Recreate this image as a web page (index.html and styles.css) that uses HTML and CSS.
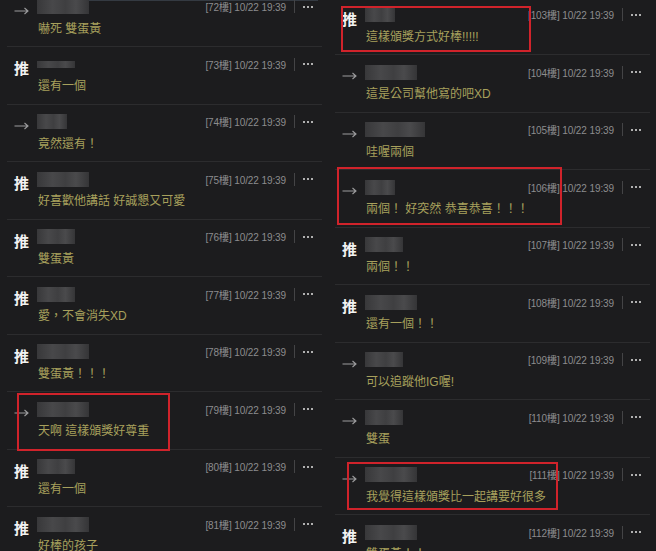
FILE: index.html
```html
<!DOCTYPE html>
<html lang="zh-Hant">
<head>
    <meta charset="UTF-8">
    <title>留言</title>
    <link rel="stylesheet" href="styles.css">
</head>
<body>
    <div class="panels">
        <!-- left screenshot -->
        <div class="panel panel-left">
            <div class="list">
                <div class="row"><div class="tag"><span class="arrow"><svg width="15" height="8" viewBox="0 0 15 8"><path d="M0.5 4H14M10.5 1L14 4L10.5 7" fill="none" stroke="currentColor" stroke-width="1.1"/></svg></span></div>
                    <div class="body"><div class="head"><span class="user u-l"></span><span class="meta">[72樓] 10/22 19:39</span><span class="bar"></span><span class="more"><i></i><i></i><i></i></span></div><div class="text">嚇死 雙蛋黃</div></div></div>
                <div class="row"><div class="tag"><span class="push">推</span></div>
                    <div class="body"><div class="head"><span class="user u-m thin"></span><span class="meta">[73樓] 10/22 19:39</span><span class="bar"></span><span class="more"><i></i><i></i><i></i></span></div><div class="text">還有一個</div></div></div>
                <div class="row"><div class="tag"><span class="arrow"><svg width="15" height="8" viewBox="0 0 15 8"><path d="M0.5 4H14M10.5 1L14 4L10.5 7" fill="none" stroke="currentColor" stroke-width="1.1"/></svg></span></div>
                    <div class="body"><div class="head"><span class="user u-s"></span><span class="meta">[74樓] 10/22 19:39</span><span class="bar"></span><span class="more"><i></i><i></i><i></i></span></div><div class="text">竟然還有！</div></div></div>
                <div class="row"><div class="tag"><span class="push">推</span></div>
                    <div class="body"><div class="head"><span class="user u-l"></span><span class="meta">[75樓] 10/22 19:39</span><span class="bar"></span><span class="more"><i></i><i></i><i></i></span></div><div class="text">好喜歡他講話 好誠懇又可愛</div></div></div>
                <div class="row"><div class="tag"><span class="push">推</span></div>
                    <div class="body"><div class="head"><span class="user u-m"></span><span class="meta">[76樓] 10/22 19:39</span><span class="bar"></span><span class="more"><i></i><i></i><i></i></span></div><div class="text">雙蛋黃</div></div></div>
                <div class="row"><div class="tag"><span class="push">推</span></div>
                    <div class="body"><div class="head"><span class="user u-m"></span><span class="meta">[77樓] 10/22 19:39</span><span class="bar"></span><span class="more"><i></i><i></i><i></i></span></div><div class="text">愛，不會消失XD</div></div></div>
                <div class="row"><div class="tag"><span class="push">推</span></div>
                    <div class="body"><div class="head"><span class="user u-l"></span><span class="meta">[78樓] 10/22 19:39</span><span class="bar"></span><span class="more"><i></i><i></i><i></i></span></div><div class="text">雙蛋黃！！！</div></div></div>
                <div class="row"><div class="tag"><span class="arrow"><svg width="15" height="8" viewBox="0 0 15 8"><path d="M0.5 4H14M10.5 1L14 4L10.5 7" fill="none" stroke="currentColor" stroke-width="1.1"/></svg></span></div>
                    <div class="body"><div class="head"><span class="user u-l"></span><span class="meta">[79樓] 10/22 19:39</span><span class="bar"></span><span class="more"><i></i><i></i><i></i></span></div><div class="text">天啊 這樣頒獎好尊重</div></div>
                    <div class="mark mark-79"></div></div>
                <div class="row"><div class="tag"><span class="push">推</span></div>
                    <div class="body"><div class="head"><span class="user u-m"></span><span class="meta">[80樓] 10/22 19:39</span><span class="bar"></span><span class="more"><i></i><i></i><i></i></span></div><div class="text">還有一個</div></div></div>
                <div class="row"><div class="tag"><span class="push">推</span></div>
                    <div class="body"><div class="head"><span class="user u-l"></span><span class="meta">[81樓] 10/22 19:39</span><span class="bar"></span><span class="more"><i></i><i></i><i></i></span></div><div class="text">好棒的孩子</div></div></div>
            </div>
        </div>

        <!-- right screenshot -->
        <div class="panel panel-right">
            <div class="list">
                <div class="row"><div class="tag"><span class="push">推</span></div>
                    <div class="body"><div class="head"><span class="user u-s"></span><span class="meta">[103樓] 10/22 19:39</span><span class="bar"></span><span class="more"><i></i><i></i><i></i></span></div><div class="text">這樣頒獎方式好棒!!!!!</div></div>
                    <div class="mark mark-103"></div></div>
                <div class="row"><div class="tag"><span class="arrow"><svg width="15" height="8" viewBox="0 0 15 8"><path d="M0.5 4H14M10.5 1L14 4L10.5 7" fill="none" stroke="currentColor" stroke-width="1.1"/></svg></span></div>
                    <div class="body"><div class="head"><span class="user u-l"></span><span class="meta">[104樓] 10/22 19:39</span><span class="bar"></span><span class="more"><i></i><i></i><i></i></span></div><div class="text">這是公司幫他寫的吧XD</div></div></div>
                <div class="row"><div class="tag"><span class="arrow"><svg width="15" height="8" viewBox="0 0 15 8"><path d="M0.5 4H14M10.5 1L14 4L10.5 7" fill="none" stroke="currentColor" stroke-width="1.1"/></svg></span></div>
                    <div class="body"><div class="head"><span class="user u-xl"></span><span class="meta">[105樓] 10/22 19:39</span><span class="bar"></span><span class="more"><i></i><i></i><i></i></span></div><div class="text">哇喔兩個</div></div></div>
                <div class="row"><div class="tag"><span class="arrow"><svg width="15" height="8" viewBox="0 0 15 8"><path d="M0.5 4H14M10.5 1L14 4L10.5 7" fill="none" stroke="currentColor" stroke-width="1.1"/></svg></span></div>
                    <div class="body"><div class="head"><span class="user u-s"></span><span class="meta">[106樓] 10/22 19:39</span><span class="bar"></span><span class="more"><i></i><i></i><i></i></span></div><div class="text">兩個！ 好突然 恭喜恭喜！！！</div></div>
                    <div class="mark mark-106"></div></div>
                <div class="row"><div class="tag"><span class="push">推</span></div>
                    <div class="body"><div class="head"><span class="user u-m"></span><span class="meta">[107樓] 10/22 19:39</span><span class="bar"></span><span class="more"><i></i><i></i><i></i></span></div><div class="text">兩個！！</div></div></div>
                <div class="row"><div class="tag"><span class="push">推</span></div>
                    <div class="body"><div class="head"><span class="user u-l"></span><span class="meta">[108樓] 10/22 19:39</span><span class="bar"></span><span class="more"><i></i><i></i><i></i></span></div><div class="text">還有一個！！</div></div></div>
                <div class="row"><div class="tag"><span class="arrow"><svg width="15" height="8" viewBox="0 0 15 8"><path d="M0.5 4H14M10.5 1L14 4L10.5 7" fill="none" stroke="currentColor" stroke-width="1.1"/></svg></span></div>
                    <div class="body"><div class="head"><span class="user u-m"></span><span class="meta">[109樓] 10/22 19:39</span><span class="bar"></span><span class="more"><i></i><i></i><i></i></span></div><div class="text">可以追蹤他IG喔!</div></div></div>
                <div class="row"><div class="tag"><span class="arrow"><svg width="15" height="8" viewBox="0 0 15 8"><path d="M0.5 4H14M10.5 1L14 4L10.5 7" fill="none" stroke="currentColor" stroke-width="1.1"/></svg></span></div>
                    <div class="body"><div class="head"><span class="user u-m"></span><span class="meta">[110樓] 10/22 19:39</span><span class="bar"></span><span class="more"><i></i><i></i><i></i></span></div><div class="text">雙蛋</div></div></div>
                <div class="row"><div class="tag"><span class="arrow"><svg width="15" height="8" viewBox="0 0 15 8"><path d="M0.5 4H14M10.5 1L14 4L10.5 7" fill="none" stroke="currentColor" stroke-width="1.1"/></svg></span></div>
                    <div class="body"><div class="head"><span class="user u-l"></span><span class="meta">[111樓] 10/22 19:39</span><span class="bar"></span><span class="more"><i></i><i></i><i></i></span></div><div class="text">我覺得這樣頒獎比一起講要好很多</div></div>
                    <div class="mark mark-111"></div></div>
                <div class="row"><div class="tag"><span class="push">推</span></div>
                    <div class="body"><div class="head"><span class="user u-l"></span><span class="meta">[112樓] 10/22 19:39</span><span class="bar"></span><span class="more"><i></i><i></i><i></i></span></div><div class="text">雙蛋黃！！</div></div></div>
            </div>
        </div>
    </div>
</body>
</html>
```

FILE: styles.css
```css
* {
    margin: 0;
    padding: 0;
    box-sizing: border-box;
}

body {
    background: #1c1c1e;
    font-family: "Liberation Sans", "Noto Sans CJK TC", sans-serif;
    overflow: hidden;
}

.panels {
    display: flex;
    width: 656px;
    height: 551px;
}

.panel {
    position: relative;
    width: 328px;
    height: 551px;
    overflow: hidden;
}

.panel-left::before {
    content: "";
    position: absolute;
    top: 0;
    left: 82px;
    width: 236px;
    height: 1px;
    background: #343a42;
}

.panel-left .list {
    margin-top: -10.5px;
}

.panel-right .list {
    margin-top: -2.5px;
}

.row {
    position: relative;
    display: flex;
    height: 57.5px;
    margin: 0 6px 0 7px;
    padding: 0 9px 0 7px;
    border-bottom: 1px solid #2c2c2e;
}

.tag {
    width: 23px;
    flex-shrink: 0;
}

.push {
    display: block;
    margin-top: 13px;
    font-family: "Noto Sans CJK TC", sans-serif;
    font-size: 15px;
    font-weight: 700;
    line-height: 16px;
    color: #f2f2f2;
}

.arrow {
    display: block;
    margin-top: 17px;
    color: #9c9c9e;
    line-height: 0;
}

.body {
    flex: 1;
    min-width: 0;
}

.head {
    display: flex;
    align-items: center;
    height: 16px;
    margin-top: 9px;
}

.user {
    height: 15px;
    background: linear-gradient(90deg, #38383a 0%, #48484a 30%, #3f3f41 55%, #4a4a4c 75%, #353537 100%);
    filter: blur(0.6px);
}

.user.thin {
    height: 7px;
}

.u-s { width: 30px; }
.u-m { width: 38px; }
.u-l { width: 52px; }
.u-xl { width: 60px; }

.meta {
    margin-left: auto;
    font-size: 10px;
    color: #8c8c8e;
    letter-spacing: -0.1px;
    white-space: nowrap;
}

.bar {
    width: 1px;
    height: 13px;
    margin: 0 8px 0 8px;
    background: #444446;
}

.more {
    display: flex;
    gap: 2px;
    width: 10px;
}

.more i {
    width: 2px;
    height: 2px;
    border-radius: 50%;
    background: #e2e2e2;
}

.text {
    margin-top: 6px;
    padding-left: 1px;
    font-size: 12px;
    line-height: 16px;
    color: #a7a05c;
    white-space: nowrap;
}

.mark {
    position: absolute;
    border: 2px solid #d0232b;
}

.mark-79 { top: 1px; left: 10px; width: 153px; height: 58px; }
.mark-103 { top: 8.5px; left: 6px; width: 190px; height: 46px; }
.mark-106 { top: -3px; left: 2px; width: 225px; height: 58px; }
.mark-111 { top: 4.5px; left: 12px; width: 211px; height: 48px; }
```
